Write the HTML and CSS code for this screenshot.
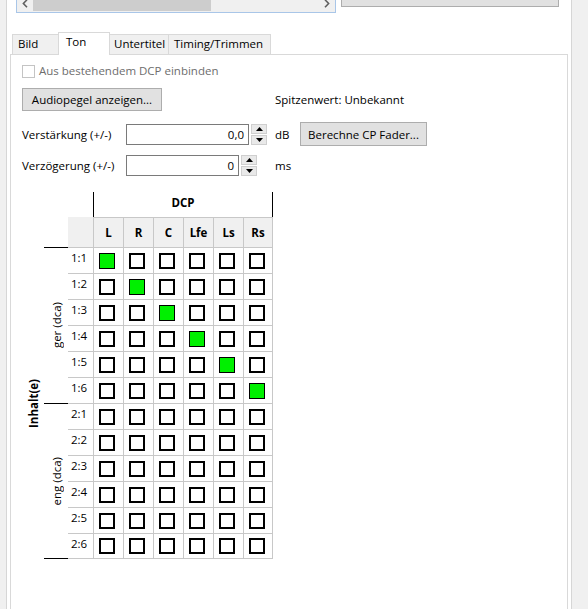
FILE: index.html
```html
<!DOCTYPE html>
<html lang="de">
<head>
<meta charset="utf-8">
<title>Ton</title>
<link rel="stylesheet" href="styles.css">
</head>
<body>
<div class="frame">
  <div class="toprow">
    <div class="scrollbox">
      <div class="hscroll">
        <div class="sb-arrow"><svg width="6" height="9" viewBox="0 0 6 9"><path d="M5 0.8 L1.4 4.5 L5 8.2" fill="none" stroke="#606060" stroke-width="1.6"/></svg></div>
        <div class="sb-track"><div class="sb-thumb"></div></div>
        <div class="sb-arrow right"><svg width="6" height="9" viewBox="0 0 6 9"><path d="M1 0.8 L4.6 4.5 L1 8.2" fill="none" stroke="#606060" stroke-width="1.6"/></svg></div>
      </div>
    </div>
    <div class="topbtn"></div>
  </div>

  <div class="tabs">
    <div class="tab t-bild">Bild</div>
    <div class="tab active t-ton">Ton</div>
    <div class="tab t-unter">Untertitel</div>
    <div class="tab t-timing">Timing/Trimmen</div>
  </div>

  <div class="panel">
    <div class="chk-row">
      <span class="chk"></span><span class="disabled">Aus bestehendem DCP einbinden</span>
    </div>

    <div class="row row-a">
      <div class="btn btn-audio">Audiopegel anzeigen...</div>
      <div class="peak">Spitzenwert: Unbekannt</div>
    </div>

    <div class="row row-b">
      <div class="lbl">Verstärkung (+/-)</div>
      <div class="num num-gain">0,0</div>
      <div class="spin">
        <div class="spin-btn"><svg width="7" height="4" viewBox="0 0 7 4"><polygon points="0,4 3.5,0 7,4" fill="#000"/></svg></div>
        <div class="spin-btn"><svg width="7" height="4" viewBox="0 0 7 4"><polygon points="0,0 7,0 3.5,4" fill="#000"/></svg></div>
      </div>
      <div class="unit unit-db">dB</div>
      <div class="btn btn-fader">Berechne CP Fader...</div>
    </div>

    <div class="row row-c">
      <div class="lbl">Verzögerung (+/-)</div>
      <div class="num num-delay">0</div>
      <div class="spin">
        <div class="spin-btn"><svg width="7" height="4" viewBox="0 0 7 4"><polygon points="0,4 3.5,0 7,4" fill="#000"/></svg></div>
        <div class="spin-btn"><svg width="7" height="4" viewBox="0 0 7 4"><polygon points="0,0 7,0 3.5,4" fill="#000"/></svg></div>
      </div>
      <div class="unit unit-ms">ms</div>
    </div>

    <div class="matrix">
      <div class="sp1"></div>
      <div class="sp2"></div>
      <div class="dcp">DCP</div>
      <div class="corner"></div>
      <div class="inhalt"><span class="vtext bold">Inhalt(e)</span></div>
      <div class="grp g1"><span class="vtext">ger (dca)</span></div>
      <div class="grp g2"><span class="vtext">eng (dca)</span></div>

      <div class="hd">L</div><div class="hd">R</div><div class="hd">C</div><div class="hd">Lfe</div><div class="hd">Ls</div><div class="hd e">Rs</div>

      <div class="rl">1:1</div><div class="c"><span class="cb on"></span></div><div class="c"><span class="cb"></span></div><div class="c"><span class="cb"></span></div><div class="c"><span class="cb"></span></div><div class="c"><span class="cb"></span></div><div class="c e"><span class="cb"></span></div>
      <div class="rl">1:2</div><div class="c"><span class="cb"></span></div><div class="c"><span class="cb on"></span></div><div class="c"><span class="cb"></span></div><div class="c"><span class="cb"></span></div><div class="c"><span class="cb"></span></div><div class="c e"><span class="cb"></span></div>
      <div class="rl">1:3</div><div class="c"><span class="cb"></span></div><div class="c"><span class="cb"></span></div><div class="c"><span class="cb on"></span></div><div class="c"><span class="cb"></span></div><div class="c"><span class="cb"></span></div><div class="c e"><span class="cb"></span></div>
      <div class="rl">1:4</div><div class="c"><span class="cb"></span></div><div class="c"><span class="cb"></span></div><div class="c"><span class="cb"></span></div><div class="c"><span class="cb on"></span></div><div class="c"><span class="cb"></span></div><div class="c e"><span class="cb"></span></div>
      <div class="rl">1:5</div><div class="c"><span class="cb"></span></div><div class="c"><span class="cb"></span></div><div class="c"><span class="cb"></span></div><div class="c"><span class="cb"></span></div><div class="c"><span class="cb on"></span></div><div class="c e"><span class="cb"></span></div>
      <div class="rl">1:6</div><div class="c"><span class="cb"></span></div><div class="c"><span class="cb"></span></div><div class="c"><span class="cb"></span></div><div class="c"><span class="cb"></span></div><div class="c"><span class="cb"></span></div><div class="c e"><span class="cb on"></span></div>
      <div class="rl">2:1</div><div class="c"><span class="cb"></span></div><div class="c"><span class="cb"></span></div><div class="c"><span class="cb"></span></div><div class="c"><span class="cb"></span></div><div class="c"><span class="cb"></span></div><div class="c e"><span class="cb"></span></div>
      <div class="rl">2:2</div><div class="c"><span class="cb"></span></div><div class="c"><span class="cb"></span></div><div class="c"><span class="cb"></span></div><div class="c"><span class="cb"></span></div><div class="c"><span class="cb"></span></div><div class="c e"><span class="cb"></span></div>
      <div class="rl">2:3</div><div class="c"><span class="cb"></span></div><div class="c"><span class="cb"></span></div><div class="c"><span class="cb"></span></div><div class="c"><span class="cb"></span></div><div class="c"><span class="cb"></span></div><div class="c e"><span class="cb"></span></div>
      <div class="rl">2:4</div><div class="c"><span class="cb"></span></div><div class="c"><span class="cb"></span></div><div class="c"><span class="cb"></span></div><div class="c"><span class="cb"></span></div><div class="c"><span class="cb"></span></div><div class="c e"><span class="cb"></span></div>
      <div class="rl">2:5</div><div class="c"><span class="cb"></span></div><div class="c"><span class="cb"></span></div><div class="c"><span class="cb"></span></div><div class="c"><span class="cb"></span></div><div class="c"><span class="cb"></span></div><div class="c e"><span class="cb"></span></div>
      <div class="rl b">2:6</div><div class="c b"><span class="cb"></span></div><div class="c b"><span class="cb"></span></div><div class="c b"><span class="cb"></span></div><div class="c b"><span class="cb"></span></div><div class="c b"><span class="cb"></span></div><div class="c b e"><span class="cb"></span></div>
    </div>
  </div>
</div>
</body>
</html>
```

FILE: styles.css
```css
* { box-sizing: border-box; }
html, body { margin: 0; height: 100%; }
body {
  background: #f0f0f0;
  font-family: "Open Sans", "Noto Sans", sans-serif;
  font-size: 11.5px;
  color: #000;
  overflow: hidden;
}
.bold { font-weight: 700; }

.frame {
  margin-left: 6px;
  width: 566px;
  height: 609px;
  background: #fff;
  border-left: 1px solid #d6d6d6;
  border-right: 1px solid #d6d6d6;
  overflow: hidden;
}

/* top row: cut-off list box with horizontal scrollbar + button */
.toprow {
  display: flex;
  align-items: flex-start;
  margin-top: -6px;
  padding-left: 9px;
}
.scrollbox {
  width: 320px;
  border: 1px solid #a9c6e8;
  background: #fff;
}
.hscroll { display: flex; height: 17px; background: #f0f0f0; }
.sb-arrow { width: 16px; display: flex; align-items: center; justify-content: center; }
.sb-arrow.right { width: 17px; }
.sb-track { flex: 1; padding: 1px 0; }
.sb-thumb { width: 178px; height: 100%; background: #cdcdcd; }
.topbtn {
  margin-left: 5px;
  width: 218px;
  height: 13px;
  border: 1px solid #adadad;
  background: #e1e1e1;
}

/* tabs */
.tabs {
  display: flex;
  align-items: flex-end;
  height: 22px;
  margin-top: 19px;
  padding-left: 5px;
}
.tab {
  height: 20px;
  border: 1px solid #d9d9d9;
  border-bottom: 0;
  margin-right: -1px;
  background: #f0f0f0;
  padding-left: 5px;
  line-height: 18px;
  white-space: nowrap;
}
.tab.active {
  position: relative;
  z-index: 1;
  height: 23px;
  margin-bottom: -1px;
  background: #fff;
  line-height: 17px;
  padding-left: 7px;
}
.t-bild { width: 47px; }
.t-ton { width: 52px; }
.t-unter { width: 60px; padding-left: 4px; }
.t-timing { width: 103px; padding-left: 5px; }

.panel {
  margin-left: 3px;
  width: 558px;
  height: 600px;
  border: 1px solid #d9d9d9;
  padding: 9px 0 0 11px;
}

/* form */
.chk-row { display: flex; align-items: center; height: 14px; }
.chk {
  width: 13px; height: 13px;
  border: 1px solid #c4c4c4;
  background: #fff;
}
.disabled { margin-left: 4px; color: #6d6d6d; line-height: 14px; }

.row { display: flex; align-items: center; }
.row-a { margin-top: 10px; height: 23px; }
.row-b { margin-top: 11px; height: 24px; }
.row-c { margin-top: 9px; height: 21px; }

.btn {
  border: 1px solid #adadad;
  background: #e1e1e1;
  display: flex;
  align-items: center;
  justify-content: center;
  white-space: nowrap;
}
.btn-audio { width: 140px; height: 23px; }
.peak { margin-left: 113px; }
.btn-fader { width: 127px; height: 24px; }

.lbl { width: 104px; white-space: nowrap; }
.num {
  height: 21px;
  border: 1px solid #7a7a7a;
  background: #fff;
  text-align: right;
  padding-right: 4px;
  line-height: 19px;
}
.num-gain { width: 123px; }
.num-delay { width: 113px; }
.spin {
  margin-left: 2px;
  width: 16px;
  height: 21px;
  display: flex;
  flex-direction: column;
  gap: 1px;
}
.spin-btn {
  flex: 1;
  border: 1px solid #cfcfcf;
  background: #e9e9e9;
  display: flex;
  align-items: center;
  justify-content: center;
}
.unit-db { margin-left: 8px; width: 25px; }
.unit-ms { margin-left: 18px; }

/* channel matrix */
.matrix {
  margin-top: 16px;
  display: grid;
  grid-template-columns: 22px 24px 25px repeat(6, 30px);
  grid-template-rows: 25px 30px repeat(12, 26px);
}
.sp1 { grid-column: 1 / 4; grid-row: 1; }
.sp2 { grid-column: 1 / 3; grid-row: 2; }
.dcp {
  grid-column: 4 / 10;
  grid-row: 1;
  border-left: 1px solid #000;
  border-right: 1px solid #000;
  font-weight: 700;
  text-align: center;
  line-height: 22px;
}
.corner { grid-column: 3; grid-row: 2; background: #f0f0f0; }
.inhalt {
  grid-column: 1;
  grid-row: 3 / 15;
  display: flex;
  align-items: center;
  justify-content: center;
}
.grp {
  grid-column: 2;
  border-top: 1px solid #000;
  display: flex;
  align-items: center;
  justify-content: center;
}
.g1 { grid-row: 3 / 9; }
.g2 { grid-row: 9 / 15; border-bottom: 1px solid #000; }
.vtext {
  writing-mode: vertical-rl;
  transform: rotate(180deg);
  white-space: nowrap;
}
.hd {
  background: #f0f0f0;
  border-left: 1px solid #c8c8c8;
  border-top: 1px solid #c8c8c8;
  font-weight: 700;
  display: flex;
  align-items: center;
  justify-content: center;
}
.rl {
  grid-column: 3;
  border-top: 1px solid #c8c8c8;
  padding: 2px 0 0 3px;
  line-height: 16px;
}
.c {
  border-left: 1px solid #c8c8c8;
  border-top: 1px solid #c8c8c8;
  display: flex;
  align-items: center;
  padding-left: 5px;
}
.e { border-right: 1px solid #c8c8c8; }
.b { border-bottom: 1px solid #c8c8c8; }
.cb {
  width: 16px;
  height: 16px;
  border: 2px solid #000;
  background: #fff;
}
.cb.on {
  background: #00f000;
  border: 1px solid #000;
}
```
